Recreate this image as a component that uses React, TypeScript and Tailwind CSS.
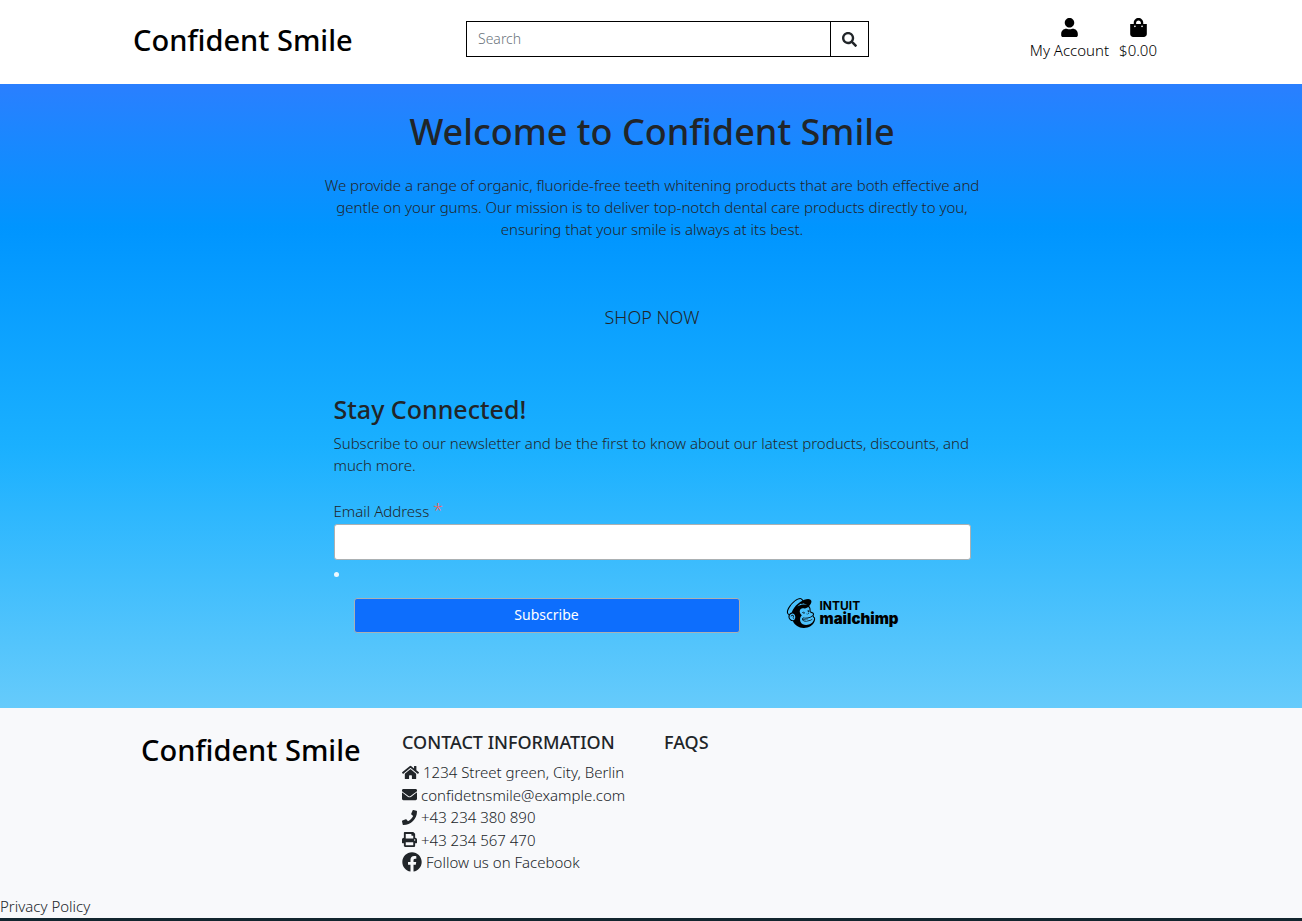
import React from "react";
import {
  FaUser,
  FaShoppingBag,
  FaSearch,
  FaHome,
  FaEnvelope,
  FaPhone,
  FaPrint,
  FaFacebook,
} from "react-icons/fa";
import { SiMailchimp } from "react-icons/si";

function Header() {
  return (
    <header className="h-[84px] bg-white text-black">
      <div className="mx-auto flex w-full max-w-[1036px] pr-3">
        <a href="#home" className="w-[333px] shrink-0 pt-5 text-[29px] leading-10 font-medium whitespace-nowrap">
          Confident Smile
        </a>
        <form className="mt-[21px] flex h-9 w-[403px] border border-black" role="search">
          <input
            type="search"
            aria-label="Search"
            placeholder="Search"
            className="min-w-0 flex-1 px-[11px] text-sm font-light outline-none placeholder:text-[#6c757d]"
          />
          <button type="button" aria-label="Submit search" className="flex w-[38px] items-center justify-center border-l border-black text-[#212529]">
            <FaSearch size={15} />
          </button>
        </form>
        <nav className="ml-auto flex justify-end gap-2.5 pt-[18px]">
          <a href="#account" className="flex flex-col items-center">
            <FaUser size={19} />
            <span className="leading-[26px] whitespace-nowrap">My Account</span>
          </a>
          <a href="#bag" className="flex flex-col items-center">
            <FaShoppingBag size={19} />
            <span className="leading-[26px]">$0.00</span>
          </a>
        </nav>
      </div>
    </header>
  );
}

function MailchimpLogo() {
  return (
    <a href="#mailchimp" aria-label="Intuit Mailchimp" className="flex items-center gap-1 pb-1 text-black">
      <SiMailchimp size={30} />
      <span className="flex flex-col font-['Inter']">
        <span className="text-xs leading-3 font-bold">INTUIT</span>
        <span className="text-[15px] leading-[14px] font-black">mailchimp</span>
      </span>
    </a>
  );
}

function Newsletter() {
  return (
    <form className="mx-auto mt-[63px] w-full max-w-[637px]">
      <h2 className="text-[25px] leading-8 font-medium">Stay Connected!</h2>
      <p className="mt-[7px] leading-[22px]">
        Subscribe to our newsletter and be the first to know about our latest products, discounts, and much more.
      </p>
      <label htmlFor="email" className="mt-6 block leading-[22px]">
        Email Address <span className="text-lg leading-4 text-[#f0655c]">*</span>
      </label>
      <input id="email" type="email" className="mt-0.5 block h-9 w-full rounded-[3px] border border-[#abb0b2] bg-white px-2" />
      <div className="mt-3 size-[5px] rounded-full bg-white/90" />
      <div className="mt-[21px] flex items-center gap-[46px] pl-5">
        <button type="button" className="h-[35px] w-[386px] rounded-[3px] border border-[#abb0b2] bg-[#0d6efd] text-sm font-normal text-white">
          Subscribe
        </button>
        <MailchimpLogo />
      </div>
    </form>
  );
}

function Hero() {
  return (
    <main className="h-[624px] bg-[linear-gradient(to_bottom,#2a7fff_0%,#0095ff_23%,#1ab0ff_58%,#66cbfb_100%)] pt-6 pl-0.5">
      <h1 className="text-center text-[36px] leading-12 font-medium">Welcome to Confident Smile</h1>
      <p className="mx-auto mt-[18px] max-w-[660px] text-center leading-[22px]">
        We provide a range of organic, fluoride-free teeth whitening products that are both effective and gentle on your gums. Our mission is to deliver top-notch dental care products directly to you, ensuring that your smile is always at its best.
      </p>
      <div className="mt-[65px] text-center">
        <a href="#shop" className="text-lg leading-6">SHOP NOW</a>
      </div>
      <Newsletter />
    </main>
  );
}

function Footer() {
  return (
    <footer className="bg-[#f8f9fb]">
      <div className="mx-auto flex h-[187px] w-full max-w-[1020px] pt-6">
        <a href="#home" className="w-[261px] text-[29px] leading-9 font-medium text-black">
          Confident Smile
        </a>
        <section className="w-[262px]">
          <h2 className="text-lg leading-5 font-medium whitespace-nowrap">CONTACT INFORMATION</h2>
          <address className="mt-[9px] leading-normal whitespace-nowrap not-italic">
            <p className="flex items-center gap-1"><FaHome size={17} />1234 Street green, City, Berlin</p>
            <p className="flex items-center gap-1"><FaEnvelope size={15} />confidetnsmile@example.com</p>
            <p className="flex items-center gap-1"><FaPhone size={15} />+43 234 380 890</p>
            <p className="flex items-center gap-1"><FaPrint size={15} />+43 234 567 470</p>
            <a href="#facebook" className="flex items-center gap-1"><FaFacebook size={20} />Follow us on Facebook</a>
          </address>
        </section>
        <section>
          <h2 className="text-lg leading-5 font-medium">FAQS</h2>
        </section>
      </div>
      <a href="#privacy" className="block leading-[23px]">Privacy Policy</a>
      <div className="h-[3px] bg-[#12262f]" />
    </footer>
  );
}

export default function App() {
  return (
    <div className="font-['Noto_Sans',sans-serif] text-[15px] font-light text-[#212529]">
      <Header />
      <Hero />
      <Footer />
    </div>
  );
}
